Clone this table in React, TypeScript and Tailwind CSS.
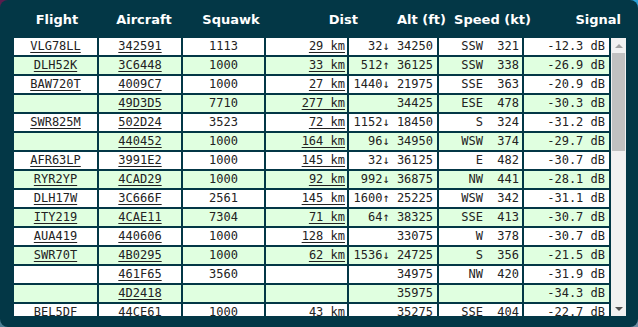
type Row = {
  flight: string;
  icao: string;
  squawk: string;
  dist: string;
  vrate: string;
  alt: string;
  dir: string;
  speed: string;
  signal: string;
};

const rows: Row[] = [
  { flight: "VLG78LL", icao: "342591", squawk: "1113", dist: "29 km", vrate: "32↓", alt: "34250", dir: "SSW", speed: "321", signal: "-12.3 dB" },
  { flight: "DLH52K", icao: "3C6448", squawk: "1000", dist: "33 km", vrate: "512↑", alt: "36125", dir: "SSW", speed: "338", signal: "-26.9 dB" },
  { flight: "BAW720T", icao: "4009C7", squawk: "1000", dist: "27 km", vrate: "1440↓", alt: "21975", dir: "SSE", speed: "363", signal: "-20.9 dB" },
  { flight: "", icao: "49D3D5", squawk: "7710", dist: "277 km", vrate: "", alt: "34425", dir: "ESE", speed: "478", signal: "-30.3 dB" },
  { flight: "SWR825M", icao: "502D24", squawk: "3523", dist: "72 km", vrate: "1152↓", alt: "18450", dir: "S", speed: "324", signal: "-31.2 dB" },
  { flight: "", icao: "440452", squawk: "1000", dist: "164 km", vrate: "96↓", alt: "34950", dir: "WSW", speed: "374", signal: "-29.7 dB" },
  { flight: "AFR63LP", icao: "3991E2", squawk: "1000", dist: "145 km", vrate: "32↓", alt: "36125", dir: "E", speed: "482", signal: "-30.7 dB" },
  { flight: "RYR2YP", icao: "4CAD29", squawk: "1000", dist: "92 km", vrate: "992↓", alt: "36875", dir: "NW", speed: "441", signal: "-28.1 dB" },
  { flight: "DLH17W", icao: "3C666F", squawk: "2561", dist: "145 km", vrate: "1600↑", alt: "25225", dir: "WSW", speed: "342", signal: "-31.1 dB" },
  { flight: "ITY219", icao: "4CAE11", squawk: "7304", dist: "71 km", vrate: "64↑", alt: "38325", dir: "SSE", speed: "413", signal: "-30.7 dB" },
  { flight: "AUA419", icao: "440606", squawk: "1000", dist: "128 km", vrate: "", alt: "33075", dir: "W", speed: "378", signal: "-30.7 dB" },
  { flight: "SWR70T", icao: "4B0295", squawk: "1000", dist: "62 km", vrate: "1536↓", alt: "24725", dir: "S", speed: "356", signal: "-21.5 dB" },
  { flight: "", icao: "461F65", squawk: "3560", dist: "", vrate: "", alt: "34975", dir: "NW", speed: "420", signal: "-31.9 dB" },
  { flight: "", icao: "4D2418", squawk: "", dist: "", vrate: "", alt: "35975", dir: "", speed: "", signal: "-34.3 dB" },
  { flight: "BEL5DF", icao: "44CE61", squawk: "1000", dist: "43 km", vrate: "", alt: "35275", dir: "SSE", speed: "404", signal: "-22.7 dB" },
];

const mono = "font-['DejaVu_Sans_Mono',monospace] text-[12px] leading-[17px] text-[#222] whitespace-pre";

const HeaderRow = () => (
  <div className="grid grid-cols-[86px_88px_86px_87px_88px_85px_91px] h-[38px] items-center pt-[1px] font-['DejaVu_Sans',sans-serif] text-[13px] font-bold text-white">
    <div className="text-center">Flight</div>
    <div className="text-center">Aircraft</div>
    <div className="text-center">Squawk</div>
    <div className="text-right pr-[3px]">Dist</div>
    <div className="text-right pr-[3px]">Alt (ft)</div>
    <div className="text-right pr-[3px]">Speed (kt)</div>
    <div className="text-right pr-[4px]">Signal</div>
  </div>
);

const DataRow = ({ row, index }: { row: Row; index: number }) => {
  const bg = index % 2 === 0 ? "bg-white" : "bg-[#e0ffe0]";
  const cell = `${bg} ${mono} h-[17px] overflow-hidden`;
  return (
    <>
      <div className={`${cell} text-center`}>
        <span className="underline underline-offset-2">{row.flight}</span>
      </div>
      <div className={`${cell} text-center`}>
        <span className="underline underline-offset-2">{row.icao}</span>
      </div>
      <div className={`${cell} text-center`}>{row.squawk}</div>
      <div className={`${cell} text-right pr-[2px]`}>
        <span className="underline underline-offset-2">{row.dist}</span>
      </div>
      <div className={`${cell} text-right pr-[4px]`}>
        {row.vrate ? `${row.vrate} ` : ""}
        {row.alt}
      </div>
      <div className={`${cell} text-right pr-[3px]`}>
        {row.dir ? `${row.dir}  ${row.speed}` : ""}
      </div>
      <div className={`${cell} text-right pr-[4px]`}>{row.signal}</div>
    </>
  );
};

const ScrollBar = () => (
  <div className="w-[15px] h-full bg-[#f1f1f1] flex flex-col items-center">
    <div className="h-[15px] flex items-center justify-center">
      <div className="w-0 h-0 border-l-[4px] border-r-[4px] border-b-[4px] border-l-transparent border-r-transparent border-b-[#a3a3a3]" />
    </div>
    <div className="w-[13px] h-[98px] bg-[#c1c1c1]" />
    <div className="flex-1" />
    <div className="h-[15px] flex items-center justify-center">
      <div className="w-0 h-0 border-l-[4px] border-r-[4px] border-t-[4px] border-l-transparent border-r-transparent border-t-[#505050]" />
    </div>
  </div>
);

export default function App() {
  return (
    <div className="w-[638px] h-[327px] bg-[conic-gradient(#2ba0d6_0deg_90deg,#6f8ea4_90deg_180deg,#4b7d92_180deg_270deg,#5a1d4d_270deg_360deg)]">
      <div className="w-full h-full rounded-[8px] bg-[#033746] pl-[14px] pr-[12px] flex flex-col">
        <HeaderRow />
        <div className="flex gap-[2px] h-[278px]">
          <div className="h-full overflow-hidden">
            <div className="grid grid-cols-[83px_82px_81px_81px_88px_83px_85px] gap-[2px]">
              {rows.map((row, i) => (
                <DataRow key={row.icao} row={row} index={i} />
              ))}
            </div>
          </div>
          <ScrollBar />
        </div>
      </div>
    </div>
  );
}
